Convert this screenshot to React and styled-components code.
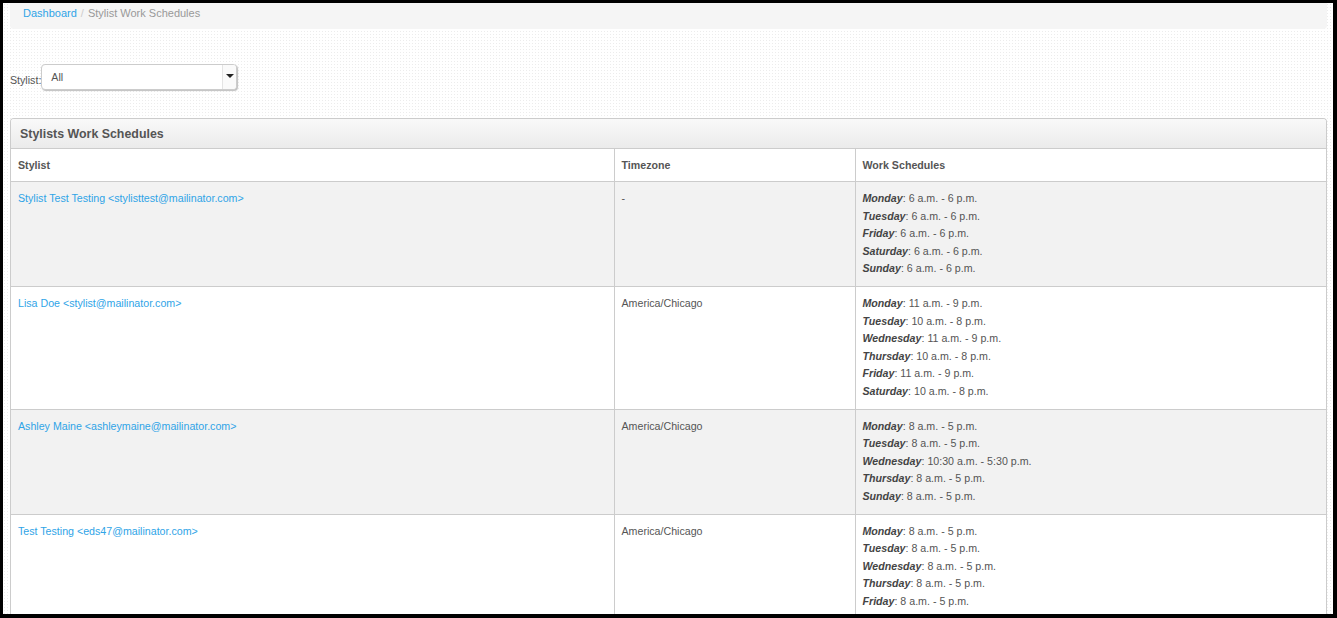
import React from "react";
import styled, { createGlobalStyle } from "styled-components";

const Global = createGlobalStyle`
  html, body { margin: 0; padding: 0; background: #000; }
  body { font-family: "Liberation Sans", Arial, Helvetica, sans-serif; font-size: 10.65px; color: #555; }
  * { box-sizing: border-box; }
`;

const Frame = styled.div`
  height: 618px;
  overflow: hidden;
  border-style: solid;
  border-color: #000;
  border-width: 3px 4px 4px 3px;
  background-color: #fff;
  background-image: radial-gradient(#ececec 0.7px, transparent 0.8px);
  background-size: 3px 3px;
`;

const Page = styled.div`
  padding: 0 6px 0 7px;
`;

const Breadcrumb = styled.nav`
  margin: 0;
  padding: 3px 13px 0;
  height: 26px;
  background: #f5f5f5;
  border-radius: 0 0 4px 4px;
  display: flex;
  align-items: flex-start;
  font-size: 11px;
  line-height: 14px;
`;

const Crumb = styled.span`
  color: ${(p) => (p.$active ? "#999" : "#2fa4e7")};
`;

const Divider = styled.span`
  color: #ccc;
  padding: 0 4px;
`;

const FilterRow = styled.div`
  display: flex;
  align-items: flex-end;
  margin-top: 35px;
  height: 26px;
`;

const Label = styled.label`
  color: #555;
  line-height: 14px;
  padding-bottom: 3px;
`;

const Select = styled.div`
  width: 196px;
  height: 26px;
  background: #fff;
  border: 1px solid #ccc;
  border-radius: 4px;
  box-shadow: 1px 1px 1px rgba(0, 0, 0, 0.25);
  display: flex;
  overflow: hidden;
`;

const SelectValue = styled.span`
  flex: 1;
  padding: 5px 9px;
  color: #555;
  line-height: 14px;
`;

const SelectArrow = styled.span`
  width: 14px;
  border-left: 1px solid #e4e4e4;
  background: #fafafa;
  display: flex;
  align-items: center;
  justify-content: center;
  &::after {
    content: "";
    border-left: 4px solid transparent;
    border-right: 4px solid transparent;
    border-top: 4px solid #222;
    margin-top: -2px;
  }
`;

const Panel = styled.section`
  margin-top: 28px;
  border: 1px solid #ccc;
  border-bottom: none;
  border-radius: 4px 4px 0 0;
  background: #fff;
`;

const PanelHeading = styled.h3`
  margin: 0;
  height: 30px;
  padding: 0 9px;
  display: flex;
  align-items: center;
  font-size: 12.4px;
  font-weight: bold;
  color: #555;
  background: linear-gradient(#f9f9f9, #ebebeb);
  border-bottom: 1px solid #ccc;
  border-radius: 3px 3px 0 0;
`;

const Table = styled.table`
  width: 100%;
  border-collapse: collapse;
  table-layout: fixed;
`;

const Th = styled.th`
  width: ${(p) => p.$w};
  text-align: left;
  font-weight: bold;
  color: #555;
  padding: 8px 7px;
  line-height: 16px;
  border-bottom: 1px solid #ccc;
  & + & { border-left: 1px solid #ccc; }
`;

const Row = styled.tr`
  background: ${(p) => (p.$striped ? "#f2f2f2" : "#fff")};
`;

const Td = styled.td`
  vertical-align: top;
  padding: 8px 7px;
  line-height: 17.6px;
  border-bottom: 1px solid #ccc;
  & + & { border-left: 1px solid #ccc; }
`;

const Link = styled.a`
  color: #2fa4e7;
  text-decoration: none;
`;

const Day = styled.div``;

const DayName = styled.b`
  font-style: italic;
  color: #444;
`;

const stylists = [
  {
    name: "Stylist Test Testing <stylisttest@mailinator.com>",
    tz: "-",
    days: [
      ["Monday", "6 a.m. - 6 p.m."],
      ["Tuesday", "6 a.m. - 6 p.m."],
      ["Friday", "6 a.m. - 6 p.m."],
      ["Saturday", "6 a.m. - 6 p.m."],
      ["Sunday", "6 a.m. - 6 p.m."],
    ],
  },
  {
    name: "Lisa Doe <stylist@mailinator.com>",
    tz: "America/Chicago",
    days: [
      ["Monday", "11 a.m. - 9 p.m."],
      ["Tuesday", "10 a.m. - 8 p.m."],
      ["Wednesday", "11 a.m. - 9 p.m."],
      ["Thursday", "10 a.m. - 8 p.m."],
      ["Friday", "11 a.m. - 9 p.m."],
      ["Saturday", "10 a.m. - 8 p.m."],
    ],
  },
  {
    name: "Ashley Maine <ashleymaine@mailinator.com>",
    tz: "America/Chicago",
    days: [
      ["Monday", "8 a.m. - 5 p.m."],
      ["Tuesday", "8 a.m. - 5 p.m."],
      ["Wednesday", "10:30 a.m. - 5:30 p.m."],
      ["Thursday", "8 a.m. - 5 p.m."],
      ["Sunday", "8 a.m. - 5 p.m."],
    ],
  },
  {
    name: "Test Testing <eds47@mailinator.com>",
    tz: "America/Chicago",
    days: [
      ["Monday", "8 a.m. - 5 p.m."],
      ["Tuesday", "8 a.m. - 5 p.m."],
      ["Wednesday", "8 a.m. - 5 p.m."],
      ["Thursday", "8 a.m. - 5 p.m."],
      ["Friday", "8 a.m. - 5 p.m."],
    ],
  },
];

export default function App() {
  return (
    <>
      <Global />
      <Frame>
        <Page>
          <Breadcrumb>
            <Crumb>Dashboard</Crumb>
            <Divider>/</Divider>
            <Crumb $active>Stylist Work Schedules</Crumb>
          </Breadcrumb>
          <FilterRow>
            <Label>Stylist:</Label>
            <Select>
              <SelectValue>All</SelectValue>
              <SelectArrow />
            </Select>
          </FilterRow>
          <Panel>
            <PanelHeading>Stylists Work Schedules</PanelHeading>
            <Table>
              <thead>
                <tr>
                  <Th $w="603px">Stylist</Th>
                  <Th $w="241px">Timezone</Th>
                  <Th>Work Schedules</Th>
                </tr>
              </thead>
              <tbody>
                {stylists.map((s, i) => (
                  <Row key={s.name} $striped={i % 2 === 0}>
                    <Td>
                      <Link href="#">{s.name}</Link>
                    </Td>
                    <Td>{s.tz}</Td>
                    <Td>
                      {s.days.map(([d, h]) => (
                        <Day key={d}>
                          <DayName>{d}</DayName>: {h}
                        </Day>
                      ))}
                    </Td>
                  </Row>
                ))}
              </tbody>
            </Table>
          </Panel>
        </Page>
      </Frame>
    </>
  );
}
